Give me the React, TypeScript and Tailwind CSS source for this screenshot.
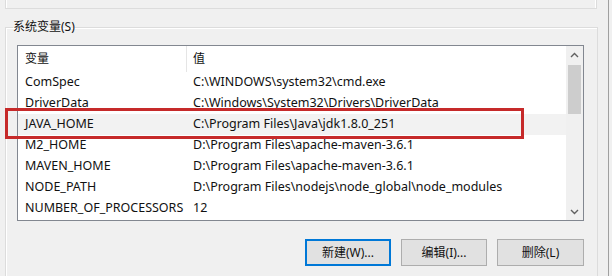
import React from "react";

const ROWS = [
  { name: "ComSpec", value: "C:\\WINDOWS\\system32\\cmd.exe" },
  { name: "DriverData", value: "C:\\Windows\\System32\\Drivers\\DriverData" },
  { name: "JAVA_HOME", value: "C:\\Program Files\\Java\\jdk1.8.0_251", hover: true },
  { name: "M2_HOME", value: "D:\\Program Files\\apache-maven-3.6.1" },
  { name: "MAVEN_HOME", value: "D:\\Program Files\\apache-maven-3.6.1" },
  { name: "NODE_PATH", value: "D:\\Program Files\\nodejs\\node_global\\node_modules" },
  { name: "NUMBER_OF_PROCESSORS", value: "12" },
];

const FONT = {
  fontFamily: '"Segoe UI", "Noto Sans", "Noto Sans CJK SC", sans-serif',
};

function Chevron({ up }: { up?: boolean }) {
  return (
    <svg width="9" height="6" viewBox="0 0 9 6" className="text-[#606060]">
      <path
        d={up ? "M1 5 L4.5 1.5 L8 5" : "M1 1 L4.5 4.5 L8 1"}
        fill="none"
        stroke="currentColor"
        strokeWidth="1.4"
      />
    </svg>
  );
}

export default function App() {
  return (
    <div
      className="relative w-[612px] h-[276px] overflow-hidden bg-[#f0f0f0] text-[12px] text-[#111] flex"
      style={FONT}
    >
      <div className="w-[608px] pl-[5px] pr-[11px]">
        {/* ── bottom of the user-variables group above ── */}
        <div className="h-[9px] border-x border-b border-[#dcdcdc] shadow-[inset_1px_0_0_#fff,inset_-1px_0_0_#fff]" />

        {/* ── 系统变量 group ── */}
        <fieldset className="mt-[10px] h-[300px] border border-[#dcdcdc] pl-[11px] pr-[13px] pt-[10px] shadow-[inset_1px_1px_0_#fff]">
          <legend className="-ml-[4px] leading-[16px]">系统变量(S)</legend>

          <div className="flex h-[176px] w-[567px] border border-[#828790] bg-white">
            <div className="flex-1 text-[12.5px]">
              <div className="flex h-[26px] items-center text-[12px]">
                <div className="w-[169px] h-full flex items-center pl-[7px] border-r border-[#e5e5e5]">变量</div>
                <div className="pl-[6px]">值</div>
              </div>
              {ROWS.map((r) => (
                <div
                  key={r.name}
                  className={`flex h-[21px] items-center whitespace-nowrap ${r.hover ? "bg-[#f2f2f2]" : ""}`}
                >
                  <div className="w-[169px] pl-[7px]">{r.name}</div>
                  <div className="pl-[6px]">{r.value}</div>
                </div>
              ))}
            </div>

            {/* ── scrollbar ── */}
            <div className="w-[17px] bg-[#f0f0f0] flex flex-col">
              <div className="h-[17px] flex items-center justify-center">
                <Chevron up />
              </div>
              <div className="flex-1 pt-[2px]">
                <div className="mx-auto w-[13px] h-[49px] bg-[#cdcdcd]" />
              </div>
              <div className="h-[17px] flex items-center justify-center">
                <Chevron />
              </div>
            </div>
          </div>

          <div className="mt-[18px] flex justify-end gap-[10px] w-[567px]">
            <button className="w-[86px] h-[27px] border-2 border-[#0078d7] bg-[#e1e1e1]">新建(W)...</button>
            <button className="w-[86px] h-[27px] border border-[#adadad] bg-[#e1e1e1]">编辑(I)...</button>
            <button className="w-[87px] h-[27px] border border-[#adadad] bg-[#e1e1e1]">删除(L)</button>
          </div>
        </fieldset>
      </div>
      <div className="w-px bg-[#a0a0a0]" />
      <div className="flex-1 bg-[#f0f0f0]" />

      {/* annotation box */}
      <div className="absolute left-[5px] top-[108px] w-[519px] h-[31px] border-[3px] border-[#c62a2a]" />
    </div>
  );
}
